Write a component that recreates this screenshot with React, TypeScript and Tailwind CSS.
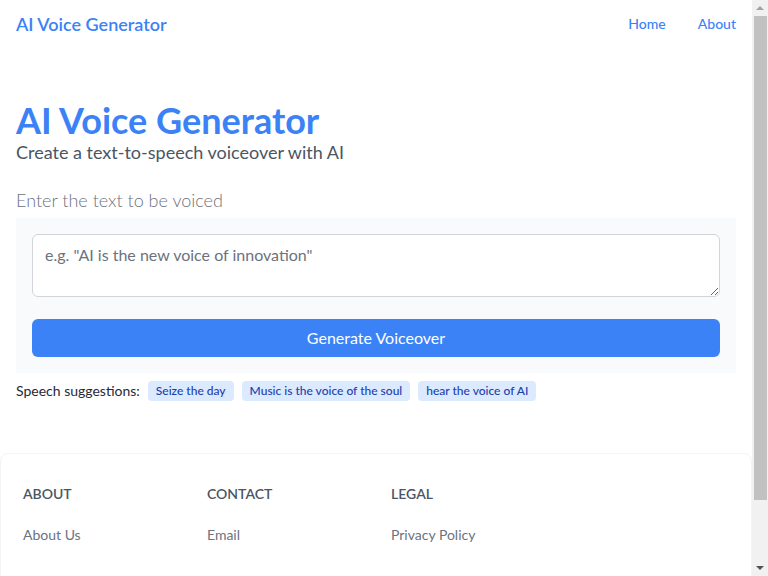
const SUGGESTIONS = ['Seize the day', 'Music is the voice of the soul', 'hear the voice of AI']

const FOOTER_COLS = [
  { title: 'About', links: ['About Us'] },
  { title: 'Contact', links: ['Email'] },
  { title: 'Legal', links: ['Privacy Policy'] },
]

function Scrollbar() {
  return (
    <div className="flex h-screen w-4 shrink-0 flex-col items-center bg-[#f1f1f1]">
      <div className="flex h-4 items-center justify-center">
        <span className="h-0 w-0 border-x-4 border-b-4 border-x-transparent border-b-[#a3a3a3]" />
      </div>
      <div className="h-[484px] w-[13px] bg-[#c1c1c1]" />
      <div className="flex-1" />
      <div className="flex h-4 items-center justify-center">
        <span className="h-0 w-0 border-x-4 border-t-4 border-x-transparent border-t-[#505050]" />
      </div>
    </div>
  )
}

export default function App() {
  return (
    <div className="flex h-screen overflow-hidden bg-white font-['Lato',sans-serif] text-[#111827]">
      <div className="min-w-0 flex-1">
        {/* Header */}
        <header className="flex h-12 items-center justify-between px-4">
          <a className="text-lg font-semibold text-[#3b82f6]">AI Voice Generator</a>
          <nav className="flex items-center gap-8 text-sm font-medium text-[#3b82f6]">
            <a>Home</a>
            <a>About</a>
          </nav>
        </header>

        <main className="px-4 pt-[52px]">
          <h1 className="text-4xl font-bold leading-10 text-[#3b82f6]">AI Voice Generator</h1>
          <p className="-mt-0.5 text-lg text-[#4b5563]">Create a text-to-speech voiceover with AI</p>

          <label className="mt-5 block text-lg font-light text-[#6b7280]">Enter the text to be voiced</label>
          <div className="mt-1 bg-[#f9fafb] p-4">
            <textarea
              rows={2}
              placeholder={'e.g. "AI is the new voice of innovation"'}
              className="block h-[63px] w-full rounded-md border border-[#d1d5db] bg-white px-3 py-2 text-base text-[#374151] placeholder:text-[#6b7280]"
            />
            <button className="mt-[22px] h-[38px] w-full rounded-md bg-[#3b82f6] text-base text-white">
              Generate Voiceover
            </button>
          </div>

          <div className="mt-2 flex items-center gap-2 text-sm">
            <span className="text-[#1f2937]">Speech suggestions:</span>
            {SUGGESTIONS.map((s) => (
              <span key={s} className="rounded bg-[#dbeafe] px-2 py-0.5 text-xs font-medium leading-4 text-[#1e40af]">
                {s}
              </span>
            ))}
          </div>
        </main>

        {/* Footer */}
        <footer className="mt-[52px] rounded-lg border border-[#f3f4f6] bg-white">
          <div className="grid grid-cols-4 gap-8 py-[30px] pl-[22px] pr-6 pb-[100px]">
            {FOOTER_COLS.map((col) => (
              <div key={col.title}>
                <h2 className="mb-[21px] text-sm font-semibold uppercase text-[#4b5563]">{col.title}</h2>
                <ul className="text-sm text-[#6b7280]">
                  {col.links.map((l) => (
                    <li key={l}>
                      <a>{l}</a>
                    </li>
                  ))}
                </ul>
              </div>
            ))}
          </div>
        </footer>
      </div>
      <Scrollbar />
    </div>
  )
}
